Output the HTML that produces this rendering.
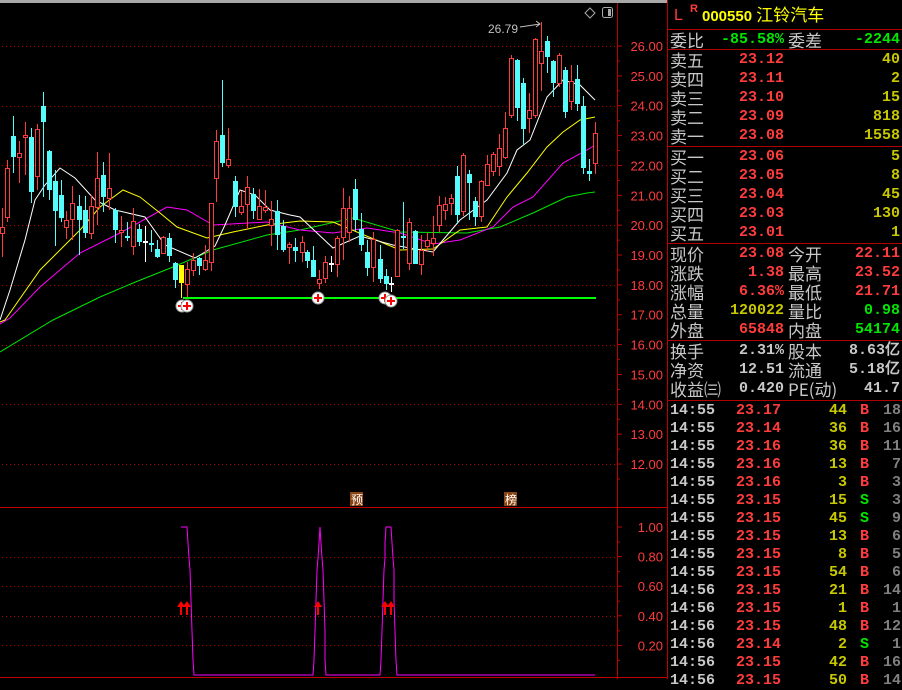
<!DOCTYPE html>
<html><head><meta charset="utf-8"><style>
html,body{margin:0;padding:0;background:#000;width:902px;height:679px;overflow:hidden}
#c{position:absolute;left:0;top:0}
.p{position:absolute;left:668px;top:0;width:234px;height:679px;font-family:"Liberation Mono","WenQuanYi Zen Hei",monospace;font-size:15px;font-weight:bold}
.r{position:absolute;left:0;width:234px;height:19px;line-height:19px;white-space:nowrap}
.r span{position:absolute}
.l1{left:2px;color:#c8c8c8;font-family:"WenQuanYi Zen Hei","Noto Sans CJK SC",sans-serif;font-size:17px;font-weight:normal}
.v1{right:118px;text-align:right}
.l2{left:120px;color:#c8c8c8;font-family:"WenQuanYi Zen Hei","Noto Sans CJK SC",sans-serif;font-size:17px;font-weight:normal}
.v2{right:2px;text-align:right}
.hl{position:absolute;left:0;width:234px;height:1px;background:#b00000}
.R{color:#ff3c3c}.G{color:#00e600}.Y{color:#c8c800}.W{color:#c8c8c8}.D{color:#808080}
.t span{position:absolute}
</style></head><body>
<svg id="c" width="902" height="679" xmlns="http://www.w3.org/2000/svg"></svg>
<div class="p" id="p">
<div class="r" style="top:6px;font-size:16px"><span style="left:6px;color:#ff3c3c;font-family:'Liberation Sans',sans-serif;font-weight:normal">L</span><span style="left:22px;top:-6px;color:#ff3c3c;font-size:11px;font-family:'Liberation Sans',sans-serif">R</span><span style="left:34px;color:#ffff00;font-family:'Liberation Sans','WenQuanYi Zen Hei',sans-serif;font-weight:bold;font-size:15px">000550 <span style="position:static;font-weight:normal;font-size:17px">江铃汽车</span></span></div>
<div class="hl" style="top:29px"></div>
<div class="r" style="top:30px"><span class="l1">委比</span><span class="v1 G">-85.58%</span><span class="l2">委差</span><span class="v2 G">-2244</span></div>
<div class="hl" style="top:49px"></div>
<div class="hl" style="top:146px"></div>
<div class="hl" style="top:243px"></div>
<div class="hl" style="top:340px"></div>
<div class="hl" style="top:400px"></div>
</div>
<script>
var S=document.getElementById('c'),ns='http://www.w3.org/2000/svg';
function el(t,a,txt){var e=document.createElementNS(ns,t);for(var k in a)e.setAttribute(k,a[k]);if(txt!=null)e.textContent=txt;S.appendChild(e);return e;}
el('rect',{x:0,y:0,width:668,height:3,fill:'#a8a8a8'});
[46,106,165,225,285,345,404,464].forEach(function(y){el('line',{x1:2,y1:y+.5,x2:617,y2:y+.5,stroke:'#b00000','stroke-dasharray':'1 3'});});
[557,586,616,645].forEach(function(y){el('line',{x1:2,y1:y+.5,x2:617,y2:y+.5,stroke:'#b00000','stroke-dasharray':'1 3'});});
el('line',{x1:617.5,y1:3,x2:617.5,y2:679,stroke:'#c00000'});
el('line',{x1:0,y1:507.5,x2:668,y2:507.5,stroke:'#c00000'});
el('line',{x1:0,y1:677.5,x2:668,y2:677.5,stroke:'#c00000'});
el('line',{x1:667.5,y1:0,x2:667.5,y2:679,stroke:'#c00000'});
var labs=['26.00','25.00','24.00','23.00','22.00','21.00','20.00','19.00','18.00','17.00','16.00','15.00','14.00','13.00','12.00'];
labs.forEach(function(t,i){var y=46+i*29.86;el('line',{x1:617,y1:y,x2:622,y2:y,stroke:'#c00000'});el('line',{x1:617,y1:y+15,x2:620,y2:y+15,stroke:'#c00000'});el('text',{x:663,y:y+5,fill:'#ff3c3c','font-family':'Liberation Sans','font-size':13,'text-anchor':'end'},t);});
['1.00','0.80','0.60','0.40','0.20'].forEach(function(t,i){var y=527+i*29.6;el('line',{x1:617,y1:y,x2:622,y2:y,stroke:'#c00000'});el('line',{x1:617,y1:y+15,x2:620,y2:y+15,stroke:'#c00000'});el('text',{x:663,y:y+5,fill:'#ff3c3c','font-family':'Liberation Sans','font-size':13,'text-anchor':'end'},t);});
function pl(pts,c){el('polyline',{points:pts,fill:'none',stroke:c,'stroke-width':1});}
pl('0,352 53,320 100,297 133,283 173,267 213,250 267,235 300,230 353,218 400,232 467,233 500,227 533,213 567,197 587,193 595,192','#00e600');
pl('0,324 10,318 40,287 80,253 120,233 167,207 187,210 213,225 267,222 300,230 333,233 367,228 400,233 433,244 460,240 493,227 513,207 533,197 563,163 587,150 595,145','#ff00ff');
pl('0,322 5,320 40,270 80,230 100,207 123,190 140,197 160,213 177,227 207,238 233,232 267,225 300,221 333,222 400,250 433,249 460,230 487,227 507,197 527,173 547,147 563,132 580,120 595,117','#ffff00');
pl('0,320 10,290 25,240 35,200 45,185 60,168 75,178 95,200 115,210 145,217 165,245 195,258 205,252 215,246 225,225 240,190 255,195 270,210 290,215 300,217 333,248 360,236 393,245 433,252 443,240 460,220 487,200 507,173 517,150 530,140 547,97 563,80 580,85 595,100','#ffffff');
var C=[[2,227,233,208,257,'r'],[7,168,217,160,222,'r'],[13,136,156,116,173,'c'],[19,153,157,141,183,'r'],[25,135,137,122,175,'r'],[31,137,191,128,203,'c'],[37,129,176,124,190,'r'],[43,106,121,92,197,'c'],[49,151,189,150,200,'c'],[55,181,210,170,246,'c'],[61,195,217,180,222,'c'],[66,220,227,211,239,'r'],[72,203,219,186,240,'r'],[79,206,219,195,255,'c'],[85,210,232,196,238,'c'],[91,206,233,195,239,'r'],[97,178,207,152,225,'r'],[103,175,196,162,212,'c'],[109,188,198,153,210,'r'],[115,210,229,208,243,'c'],[121,230,232,216,247,'r'],[127,236,237,222,241,'c'],[133,221,246,208,255,'r'],[139,229,241,224,246,'c'],[145,241,242,226,262,'w'],[151,243,244,230,252,'c'],[157,249,256,240,258,'c'],[163,237,253,236,254,'r'],[169,238,255,233,262,'c'],[175,263,279,262,288,'c'],[181,265,282,265,298,'y'],[187,269,284,262,299,'r'],[193,260,270,253,276,'r'],[199,258,265,257,275,'c'],[205,260,269,245,271,'r'],[211,203,262,203,271,'r'],[216,141,178,130,202,'r'],[222,135,162,80,167,'c'],[228,159,165,128,168,'r'],[235,181,206,176,217,'c'],[241,206,212,191,215,'r'],[247,187,204,176,229,'r'],[253,194,210,188,219,'c'],[259,206,219,189,220,'r'],[265,207,210,190,213,'r'],[271,219,225,201,246,'r'],[277,211,234,200,250,'c'],[283,226,249,220,252,'c'],[289,244,247,242,264,'r'],[295,247,250,238,262,'c'],[302,242,252,236,262,'r'],[307,252,260,250,268,'c'],[313,260,276,246,277,'c'],[319,279,283,270,289,'r'],[325,262,278,256,283,'r'],[331,263,264,256,272,'w'],[337,238,264,236,277,'r'],[343,208,237,188,260,'r'],[349,208,232,196,242,'r'],[355,189,219,179,231,'c'],[361,229,244,213,251,'c'],[367,252,267,240,276,'c'],[373,239,267,232,282,'r'],[380,259,278,245,283,'c'],[386,276,283,269,290,'c'],[391,283,284,277,292,'w'],[397,230,276,229,277,'r'],[403,236,237,202,249,'c'],[409,222,263,218,270,'r'],[415,231,263,230,264,'c'],[421,250,264,235,275,'r'],[427,240,246,233,252,'r'],[433,238,243,216,256,'r'],[439,205,225,196,232,'r'],[445,204,210,197,220,'r'],[451,198,203,194,215,'r'],[457,176,214,166,224,'c'],[463,155,211,153,216,'r'],[469,174,182,170,220,'c'],[475,201,216,197,226,'c'],[481,181,216,180,222,'r'],[487,164,185,155,186,'r'],[493,154,171,152,176,'r'],[499,148,166,134,176,'r'],[505,128,157,112,159,'r'],[511,58,115,55,118,'r'],[517,60,107,59,121,'c'],[523,83,128,78,145,'c'],[529,110,118,93,133,'r'],[535,39,115,38,118,'r'],[541,51,63,22,91,'r'],[547,41,56,36,73,'c'],[553,61,82,60,97,'c'],[559,55,83,53,87,'r'],[565,70,111,67,118,'c'],[571,81,101,65,110,'r'],[577,79,103,65,111,'c'],[583,106,167,96,174,'c'],[589,171,173,159,181,'c'],[595,133,163,122,174,'r']];
var col={r:'#ff3c3c',c:'#54fcfc',w:'#ffffff',y:'#ffff00'};
C.forEach(function(d){var x=d[0],c=col[d[5]];
el('line',{x1:x+.5,y1:d[3],x2:x+.5,y2:d[4],stroke:c});
var h=Math.max(1,d[2]-d[1]);
if(d[5]=='r')el('rect',{x:x-1.5,y:d[1]+.5,width:4,height:h,fill:'#000',stroke:c});
else el('rect',{x:x-2,y:d[1],width:5,height:h+1,fill:c});});
el('rect',{x:183,y:297,width:413,height:2,fill:'#00ff00'});
function circ(x,y){el('circle',{cx:x,cy:y,r:6,fill:'#fff',stroke:'#999'});el('rect',{x:x-4,y:y-1,width:8,height:2,fill:'#ff0000'});el('rect',{x:x-1,y:y-4,width:2,height:8,fill:'#ff0000'});}
circ(182,306);circ(187,306);circ(318,298);circ(385,298);circ(391,301);
el('text',{x:488,y:33,fill:'#c0c0c0','font-family':'Liberation Sans','font-size':12},'26.79');
pl('520,27 540,24','#c0c0c0');pl('536,21 540,24 536,27','#c0c0c0');
el('path',{d:'M590 8 L595 13 L590 18 L585 13 Z',fill:'none',stroke:'#aaa'});
el('rect',{x:602.5,y:7.5,width:10,height:10,rx:2,fill:'none',stroke:'#aaa'});
el('rect',{x:608,y:9,width:3,height:7,fill:'#aaa'});
[[350,'预'],[504,'榜']].forEach(function(d){el('rect',{x:d[0],y:492,width:13,height:14,fill:'#8b4513'});el('text',{x:d[0]+1,y:504,fill:'#fff','font-family':'WenQuanYi Zen Hei','font-size':12},d[1]);});
pl('181,527 187,527 188,543 189,558 190,570 191,600 192,631 193,660 194,675 313,675 314,660 315,631 316,600 317,570 318,558 319,543 320,527 321,543 322,558 323,570 324,600 325,631 325,660 326,675 380,675 381,660 382,631 383,600 384,570 385,558 385,543 386,527 391,527 392,543 393,558 394,570 394,600 395,631 396,660 397,675 595,675','#ff00ff');
[181,187,318,385,391].forEach(function(x){el('path',{d:'M'+x+' 601 l-4 6 h3 v8 h2 v-8 h3 Z',fill:'#ff0000'});});
var P=document.getElementById('p');
function row(top,l1,v1,c1,l2,v2,c2){var d=document.createElement('div');d.className='r';d.style.top=top+'px';
d.innerHTML='<span class="l1">'+l1+'</span><span class="v1 '+c1+'">'+v1+'</span>'+(l2?'<span class="l2">'+l2+'</span>':'')+'<span class="v2 '+c2+'">'+v2+'</span>';P.appendChild(d);}
var a=[['卖五','23.12','40'],['卖四','23.11','2'],['卖三','23.10','15'],['卖二','23.09','818'],['卖一','23.08','1558']];
a.forEach(function(d,i){row(50+i*19,d[0],d[1],'R','',d[2],'Y');});
var b=[['买一','23.06','5'],['买二','23.05','8'],['买三','23.04','45'],['买四','23.03','130'],['买五','23.01','1']];
b.forEach(function(d,i){row(147+i*19,d[0],d[1],'R','',d[2],'Y');});
var q=[['现价','23.08','R','今开','22.11','R'],['涨跌','1.38','R','最高','23.52','R'],['涨幅','6.36%','R','最低','21.71','R'],['总量','120022','Y','量比','0.98','G'],['外盘','65848','R','内盘','54174','G']];
q.forEach(function(d,i){row(244+i*19,d[0],d[1],d[2],d[3],d[4],d[5]);});
var z=[['换手','2.31%','股本','8.63亿'],['净资','12.51','流通','5.18亿'],['收益㈢','0.420','PE(动)','41.7']];
z.forEach(function(d,i){row(341+i*19,d[0],d[1],'W',d[2],d[3],'W');});
var T=[['14:55','23.17','44','B','18'],['14:55','23.14','36','B','16'],['14:55','23.16','36','B','11'],['14:55','23.16','13','B','7'],['14:55','23.16','3','B','3'],['14:55','23.15','15','S','3'],['14:55','23.15','45','S','9'],['14:55','23.15','13','B','6'],['14:55','23.15','8','B','5'],['14:55','23.15','54','B','6'],['14:56','23.15','21','B','14'],['14:56','23.15','1','B','1'],['14:56','23.15','48','B','12'],['14:56','23.14','2','S','1'],['14:56','23.15','42','B','16'],['14:56','23.15','50','B','14']];
T.forEach(function(d,i){var e=document.createElement('div');e.className='r t';e.style.top=(402+i*18)+'px';e.style.height='18px';e.style.lineHeight='18px';
e.innerHTML='<span class="W" style="left:2px">'+d[0]+'</span><span class="R" style="right:121px">'+d[1]+'</span><span class="Y" style="right:55px">'+d[2]+'</span><span class="'+(d[3]=='B'?'R':'G')+'" style="left:192px">'+d[3]+'</span><span class="D" style="right:1px">'+d[4]+'</span>';P.appendChild(e);});
</script>
</body></html>
